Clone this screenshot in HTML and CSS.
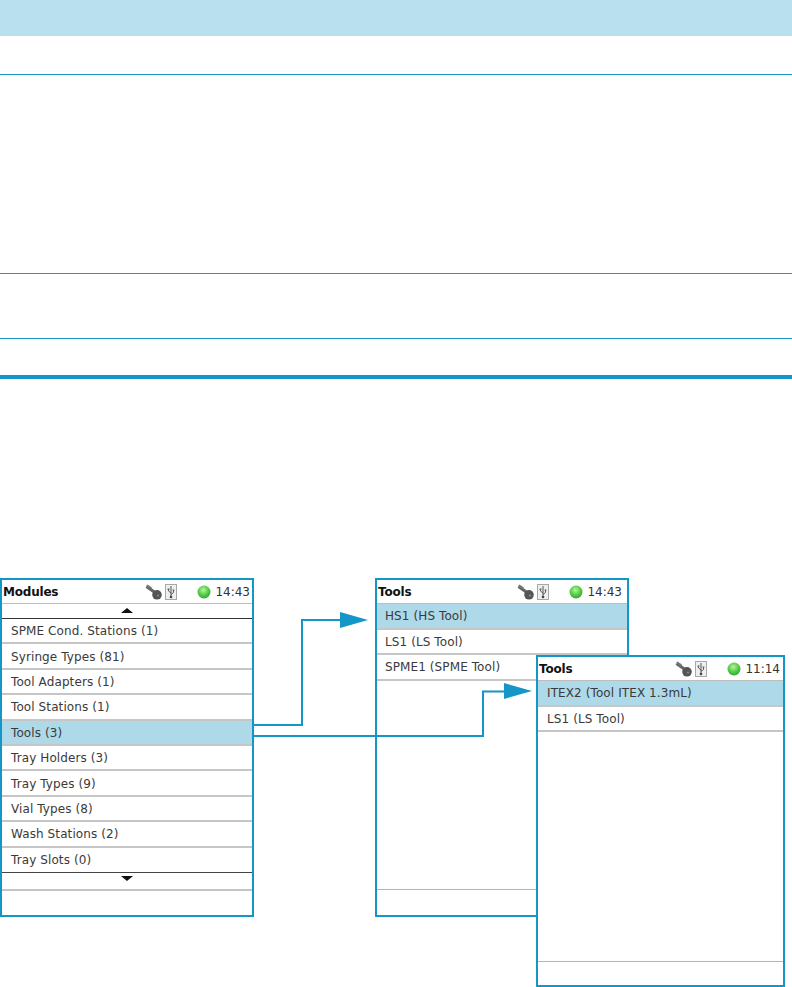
FILE: index.html
```html
<!DOCTYPE html>
<html lang="en">
<head>
<meta charset="utf-8">
<title>Tools</title>
<link rel="stylesheet" href="styles.css">
</head>
<body>
<svg width="0" height="0" class="defs">
  <defs>
    <radialGradient id="led" cx="0.45" cy="0.35" r="0.7">
      <stop offset="0" stop-color="#b5f5a0"/>
      <stop offset="0.55" stop-color="#55cc45"/>
      <stop offset="1" stop-color="#2f9f35"/>
    </radialGradient>
    <symbol id="key" viewBox="0 0 17 16">
      <path d="M1.5 2.5 L10 8.5" fill="none" stroke="#666" stroke-width="3.2"/>
      <path d="M2.5 0.5 L7 3.5 L5.5 5 L1 2 Z" fill="#777"/>
      <circle cx="12" cy="10.8" r="4.8" fill="#555"/>
      <circle cx="13" cy="11.5" r="1.1" fill="#8a8a8a"/>
    </symbol>
    <symbol id="usb" viewBox="0 0 12 16">
      <rect x="0.5" y="0.5" width="11" height="15" fill="#efefef" stroke="#a8a8a8"/>
      <path d="M6 2 V13 M6 9 L3.5 7 V5.5 M6 10.5 L8.5 8.5 V6.5" fill="none" stroke="#555" stroke-width="1"/>
      <circle cx="6" cy="13" r="1.3" fill="#444"/>
      <rect x="2.6" y="4.4" width="1.8" height="1.6" fill="#666"/>
      <rect x="7.7" y="5.4" width="1.6" height="1.6" fill="#666"/>
    </symbol>
  </defs>
</svg>

<section class="doc">
  <div class="band"></div>
  <div class="doc-row doc-row-a"></div>
  <div class="doc-row doc-row-b"></div>
  <div class="doc-row doc-row-c"></div>
  <div class="doc-row doc-row-d"></div>
</section>
<div class="thick-rule"></div>

<section class="figure">
  <article class="screen screen-modules">
    <header class="head">
      <span class="title">Modules</span>
      <span class="status">
        <svg class="ico-key"><use href="#key"/></svg>
        <svg class="ico-usb"><use href="#usb"/></svg>
        <svg class="ico-led" viewBox="0 0 14 14"><circle cx="7" cy="7" r="6.5" fill="url(#led)"/></svg>
        <span class="time">14:43</span>
      </span>
    </header>
    <div class="scroll scroll-up"><span class="tri tri-up"></span></div>
    <ul class="list list-modules">
      <li class="row">SPME Cond. Stations (1)</li>
      <li class="row">Syringe Types (81)</li>
      <li class="row">Tool Adapters (1)</li>
      <li class="row">Tool Stations (1)</li>
      <li class="row sel">Tools (3)</li>
      <li class="row">Tray Holders (3)</li>
      <li class="row">Tray Types (9)</li>
      <li class="row">Vial Types (8)</li>
      <li class="row">Wash Stations (2)</li>
      <li class="row last">Tray Slots (0)</li>
    </ul>
    <div class="scroll scroll-down"><span class="tri tri-down"></span></div>
    <div class="foot"></div>
  </article>

  <article class="screen screen-tools">
    <header class="head">
      <span class="title">Tools</span>
      <span class="status">
        <svg class="ico-key"><use href="#key"/></svg>
        <svg class="ico-usb"><use href="#usb"/></svg>
        <svg class="ico-led" viewBox="0 0 14 14"><circle cx="7" cy="7" r="6.5" fill="url(#led)"/></svg>
        <span class="time">14:43</span>
      </span>
    </header>
    <ul class="list">
      <li class="row tall sel">HS1 (HS Tool)</li>
      <li class="row tall">LS1 (LS Tool)</li>
      <li class="row tall">SPME1 (SPME Tool)</li>
    </ul>
    <div class="foot foot-line"></div>
  </article>

  <svg class="wires" viewBox="0 0 792 409" width="792" height="409">
    <path class="wire" d="M253 346 H302 V241 H345"/>
    <polygon class="arrow" points="340,233 368,241 340,249"/>
    <path class="wire" d="M253 357 H483 V312.5 H508"/>
    <polygon class="arrow" points="504,304 532,312 504,320"/>
  </svg>

  <article class="screen screen-itex">
    <header class="head">
      <span class="title">Tools</span>
      <span class="status">
        <svg class="ico-key"><use href="#key"/></svg>
        <svg class="ico-usb"><use href="#usb"/></svg>
        <svg class="ico-led" viewBox="0 0 14 14"><circle cx="7" cy="7" r="6.5" fill="url(#led)"/></svg>
        <span class="time">11:14</span>
      </span>
    </header>
    <ul class="list">
      <li class="row tall sel">ITEX2 (Tool ITEX 1.3mL)</li>
      <li class="row tall">LS1 (LS Tool)</li>
    </ul>
    <div class="foot foot-line foot-short"></div>
  </article>
</section>
</body>
</html>
```
FILE: styles.css
```css
* { box-sizing: border-box; }
html, body { margin: 0; padding: 0; background: #fff; }
body { width: 792px; height: 987px; overflow: hidden; font-family: "DejaVu Sans", sans-serif; }
.defs { position: absolute; }

.band { height: 36px; background: #b9e0ef; }
.doc-row { border-bottom: 1px solid #1a9bc9; }
.doc-row-a { height: 39px; }
.doc-row-b { height: 199px; }
.doc-row-c { height: 65px; }
.doc-row-d { height: 36px; border-bottom: 0; }
.thick-rule { height: 4px; background: #1496c6; }

.figure { position: relative; width: 792px; height: 608px; }
.screen {
  position: absolute;
  display: flex;
  flex-direction: column;
  background: #fff;
  border: 2px solid #1496c6;
}
.screen-modules { left: 0; top: 199px; width: 254px; height: 339px; }
.screen-tools { left: 375px; top: 199px; width: 254px; height: 339px; }
.screen-itex { left: 536px; top: 276px; width: 249px; height: 332px; }

.head {
  flex: none;
  height: 24px;
  display: flex;
  align-items: center;
  justify-content: space-between;
  border-bottom: 1px solid #bdbdbd;
  padding: 1px 2px 0 1px;
}
.screen-tools .head { padding-right: 5px; }
.screen-itex .head { padding-right: 3px; }
.title { font-size: 12px; font-weight: 700; color: #111; letter-spacing: -0.2px; }
.status { display: flex; align-items: center; }
.ico-key { width: 17px; height: 16px; margin-right: 3px; }
.ico-usb { width: 12px; height: 16px; margin-right: 20px; }
.ico-led { width: 14px; height: 14px; margin-right: 4px; }
.time { font-size: 12px; color: #333; }

.scroll { flex: none; display: flex; justify-content: center; }
.scroll-up { height: 15px; border-bottom: 1px solid #333; padding-top: 4px; }
.scroll-down { height: 18px; border-bottom: 2px solid #c4c4c4; padding-top: 3px; }
.tri { width: 0; height: 0; border-left: 6px solid transparent; border-right: 6px solid transparent; }
.tri-up { border-bottom: 5px solid #111; }
.tri-down { border-top: 5px solid #111; }

.list { flex: 1; margin: 0; padding: 0; list-style: none; }
.list-modules { flex: none; }
.row {
  height: 25.4px;
  display: flex;
  align-items: center;
  padding: 1px 0 0 9px;
  font-size: 12px;
  letter-spacing: 0.1px;
  color: #3a3a3a;
  border-bottom: 2px solid #c6c6c6;
}
.row.tall { height: 25.6px; padding-left: 8px; }
.screen-itex .row.tall { padding-left: 9px; }
.row.last { border-bottom: 1px solid #444; }
.sel { background: #aed9e8; }
.foot { flex: 1; }
.foot-line { flex: none; height: 26px; border-top: 1px solid #b4b4b4; }
.foot-short { height: 24px; }

.wires { position: absolute; left: 0; top: 0; }
.wire { fill: none; stroke: #1496c6; stroke-width: 2; }
.arrow { fill: #1496c6; }
```
